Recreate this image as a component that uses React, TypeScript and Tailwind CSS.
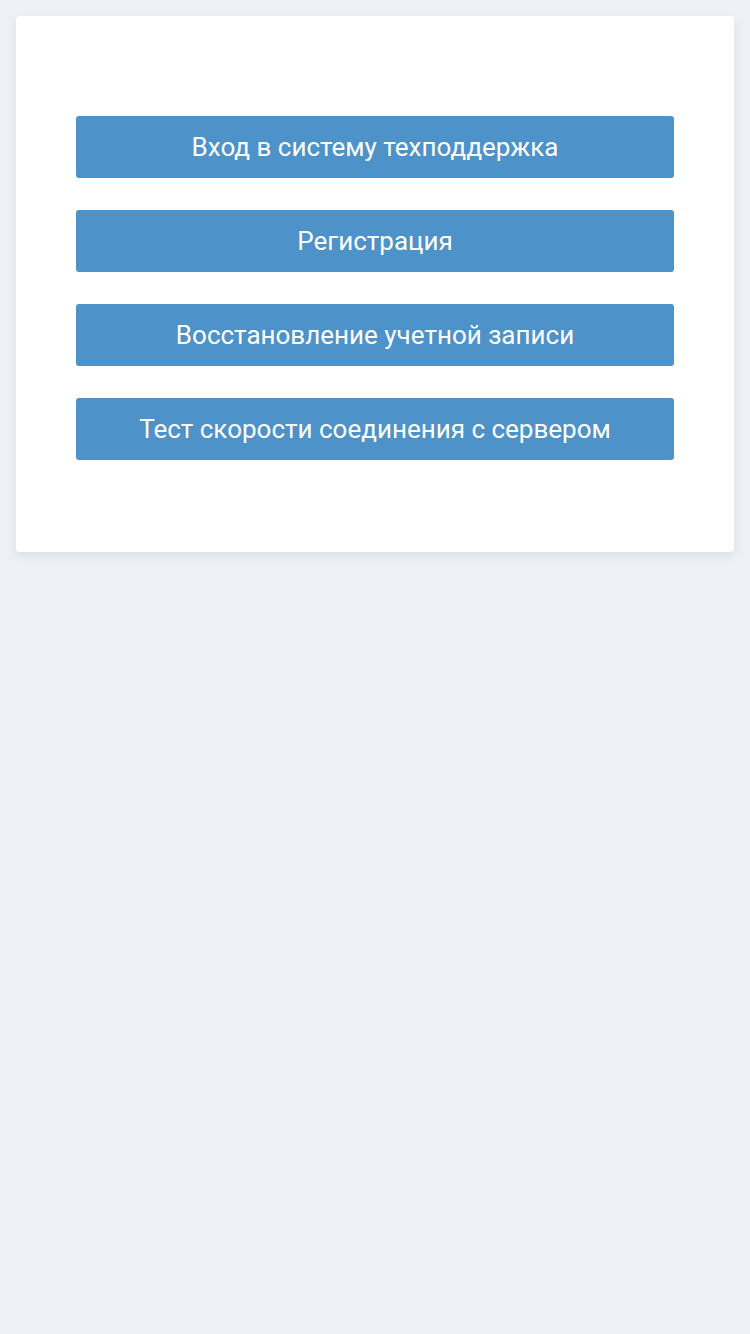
export default function App() {
  const items = [
    'Вход в систему техподдержка',
    'Регистрация',
    'Восстановление учетной записи',
    'Тест скорости соединения с сервером',
  ]

  return (
    <div className="min-h-[1334px] bg-[#edf1f6] p-4 font-['Roboto',sans-serif]">
      <div className="flex flex-col gap-8 rounded bg-white px-[60px] pt-[100px] pb-[92px] shadow-[0_4px_10px_rgba(0,0,0,0.08)]">
        {items.map((label) => (
          <button
            key={label}
            className="flex h-[62px] items-center justify-center rounded-[3px] bg-[#4d92c8] text-[26px] text-white"
          >
            {label}
          </button>
        ))}
      </div>
    </div>
  )
}
